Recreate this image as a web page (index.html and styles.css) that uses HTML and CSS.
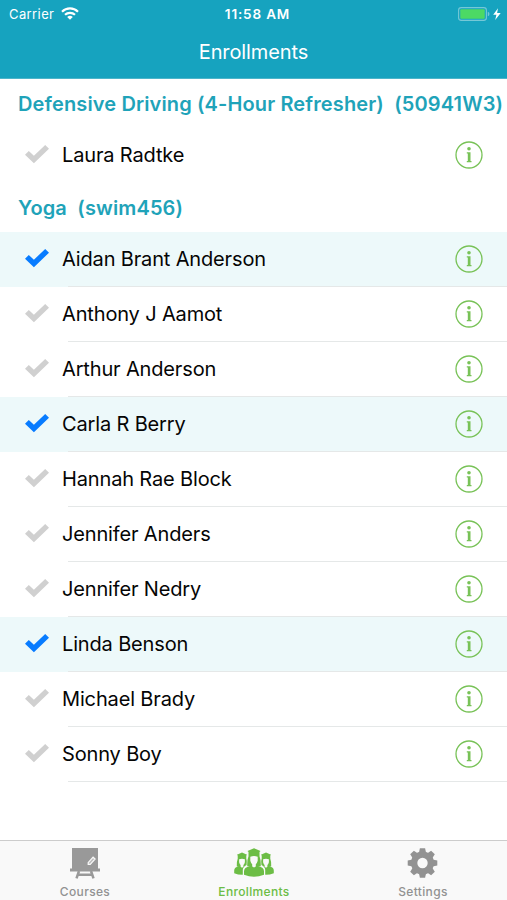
FILE: index.html
```html
<!DOCTYPE html>
<html lang="en">
<head>
<meta charset="utf-8">
<title>Enrollments</title>
<link rel="stylesheet" href="styles.css">
</head>
<body>
<svg class="defs" aria-hidden="true">
  <symbol id="check" viewBox="0 0 24 20"><path d="M0 10.7 3.8 7 8.9 11.8 20.2.9 24 4.7 8.9 19.3Z" fill="currentColor"/></symbol>
  <symbol id="info" viewBox="0 0 28 28"><circle cx="14" cy="14" r="13" fill="none" stroke="currentColor" stroke-width="1.3"/><circle cx="14" cy="7.8" r="1.8" fill="currentColor"/><path d="M11.8 11.2h3.7v8.9h1v1.2h-4.7v-1.2h1v-7.7h-1Z" fill="currentColor"/></symbol>
</svg>
<div class="app">
  <header class="top">
    <div class="status">
      <div class="carrier"><span>Carrier</span>
        <svg width="18" height="13" viewBox="0 0 18 13"><g fill="none" stroke="#fff" stroke-width="2.2"><path d="M1 4.7a11.5 11.5 0 0 1 16 0"/><path d="M4 7.8a7.2 7.2 0 0 1 10 0"/></g><path d="M6.2 10a4 4 0 0 1 5.6 0L9 12.8Z" fill="#fff"/></svg>
      </div>
      <div class="time">11:58 AM</div>
      <div class="power">
        <svg width="44" height="14" viewBox="0 0 44 14"><rect x=".6" y=".6" width="27.8" height="12.8" rx="2.6" fill="none" stroke="#75c8d7" stroke-width="1.1"/><rect x="2.3" y="2.3" width="24.4" height="9.4" rx="1" fill="#4cd964"/><path d="M29.8 4.7q1.7.6 1.7 2.3t-1.7 2.3Z" fill="#75c8d7"/><path d="M40 1.2 35.2 7.8h3.2L37.2 13 42.7 6.1h-3.6Z" fill="#fff"/></svg>
      </div>
    </div>
    <h1>Enrollments</h1>
  </header>
  <main>
    <h2 class="first">Defensive Driving (4-Hour Refresher)  (50941W3)</h2>
    <ul>
      <li><svg class="check"><use href="#check"/></svg><div class="cell"><span>Laura Radtke</span><svg class="info"><use href="#info"/></svg></div></li>
    </ul>
    <h2 class="yoga">Yoga  (swim456)</h2>
    <ul class="lined">
      <li class="on"><svg class="check"><use href="#check"/></svg><div class="cell"><span>Aidan Brant Anderson</span><svg class="info"><use href="#info"/></svg></div></li>
      <li><svg class="check"><use href="#check"/></svg><div class="cell"><span>Anthony J Aamot</span><svg class="info"><use href="#info"/></svg></div></li>
      <li><svg class="check"><use href="#check"/></svg><div class="cell"><span>Arthur Anderson</span><svg class="info"><use href="#info"/></svg></div></li>
      <li class="on"><svg class="check"><use href="#check"/></svg><div class="cell"><span>Carla R Berry</span><svg class="info"><use href="#info"/></svg></div></li>
      <li><svg class="check"><use href="#check"/></svg><div class="cell"><span>Hannah Rae Block</span><svg class="info"><use href="#info"/></svg></div></li>
      <li><svg class="check"><use href="#check"/></svg><div class="cell"><span>Jennifer Anders</span><svg class="info"><use href="#info"/></svg></div></li>
      <li><svg class="check"><use href="#check"/></svg><div class="cell"><span>Jennifer Nedry</span><svg class="info"><use href="#info"/></svg></div></li>
      <li class="on"><svg class="check"><use href="#check"/></svg><div class="cell"><span>Linda Benson</span><svg class="info"><use href="#info"/></svg></div></li>
      <li><svg class="check"><use href="#check"/></svg><div class="cell"><span>Michael Brady</span><svg class="info"><use href="#info"/></svg></div></li>
      <li><svg class="check"><use href="#check"/></svg><div class="cell"><span>Sonny Boy</span><svg class="info"><use href="#info"/></svg></div></li>
    </ul>
  </main>
  <nav>
    <div class="tab">
      <svg width="40" height="34" viewBox="0 0 40 34"><path d="M7 0h26v20.5h2v3H5v-3h2Z" fill="#999"/><path d="m14 23-2.5 7.3M26 23l2.5 7.3M13 26.7h14" fill="none" stroke="#999" stroke-width="2.5"/><path d="m23.2 14.6 4.9-5.4 2 1.8-4.9 5.4h-2Z" fill="#bbb" stroke="#f9f9f9" stroke-width="1.2"/></svg>
      <span>Courses</span>
    </div>
    <div class="tab active">
      <svg width="40" height="34" viewBox="0 0 40 34"><defs><g id="grad"><path d="m0-14 6.5 2.7-1 1.1V-6q1.6 4 1.2 10H4.2Q10 5 10 9v3.5q-10 4-20 0V9q0-4 5.8-5h-2.5q-.4-6 1.2-10v-4.2l-1-1.1Z" fill="#6cbd45"/><path d="M-3.7-5.5Q0-7 3.7-5.5v4Q3 1 1.8 2v2.2L0 5.4l-1.8-1.2V2Q-3 1-3.7-1.5Z" fill="#f9f9f9"/></g></defs><use href="#grad" transform="translate(8 15.5) scale(.78)"/><use href="#grad" transform="translate(32 15.5) scale(.78)"/><path d="m20 0 7.2 3.2-1 2V9q1.3 4 1.2 8 3.8 2 3.8 5v6H8.8v-6q0-3 3.8-5-.1-4 1.2-8V5.2l-1-2Z" fill="#f9f9f9"/><use href="#grad" transform="translate(20 14.2)"/></svg>
      <span>Enrollments</span>
    </div>
    <div class="tab">
      <svg width="40" height="34" viewBox="0 0 40 34"><g fill="#929292" transform="translate(19.5 15)"><g id="teeth"><path id="tooth" d="M-3.6-10-2.6-14.8h5.2L3.6-10V10L2.6 14.8h-5.2L-3.6 10Z"/><use href="#tooth" transform="rotate(90)"/></g><use href="#teeth" transform="rotate(45)"/><circle r="11.5"/><circle r="5.2" fill="#f9f9f9"/></g></svg>
      <span>Settings</span>
    </div>
  </nav>
</div>
</body>
</html>
```

FILE: styles.css
```css
* { box-sizing: border-box; }
body { margin: 0; font-family: Inter, "Liberation Sans", sans-serif; color: #111; background: #fff; }
h1, h2, ul { margin: 0; padding: 0; font-weight: 400; }
svg { display: block; flex: none; }
.defs { display: none; }
.app { width: 507px; height: 900px; display: flex; flex-direction: column; overflow: hidden; }
.top { height: 79px; background: #16a3bf; color: #fff; border-bottom: 1px solid #4cb5ca; }
.status { height: 27px; padding: 0 5px 0 9px; display: grid; grid-template-columns: 1fr auto 1fr; align-items: center; font-size: 13px; }
.carrier { display: flex; align-items: center; gap: 7px; letter-spacing: .4px; }
.time { font-weight: 600; font-size: 13.5px; letter-spacing: .85px; padding-left: 4px; }
.power { justify-self: end; }
h1 { font-size: 20px; line-height: 50px; text-align: center; letter-spacing: -.1px; }
main { flex: 1; }
h2 { padding-left: 18px; font-size: 20px; font-weight: 600; color: #1fa3b9; white-space: pre; letter-spacing: .13px; }
.first { height: 49px; line-height: 50px; }
.yoga { height: 49px; line-height: 50px; }
ul { list-style: none; }
li { height: 55px; padding-left: 25px; display: flex; align-items: center; color: #d0d0d0; }
.check { width: 24px; height: 20px; margin-bottom: 3px; }
.cell { flex: 1; height: 55px; margin-left: 13px; padding: 0 24px 2px 0; display: flex; align-items: center; justify-content: space-between; color: #050505; font-size: 20px; letter-spacing: -.15px; }
.lined .cell { background: linear-gradient(#e5e8e8, #e5e8e8) 6px 54px / 100% 1px no-repeat; }
.info { width: 28px; height: 28px; color: #78c257; }
.on { background: #edf9fa; color: #087cff; }
nav { height: 60px; display: grid; grid-template-columns: repeat(3, 169px); border-top: 1px solid #ccc; background: #f9f9f9; }
.tab { padding: 7px 0 0 1px; display: flex; flex-direction: column; align-items: center; gap: 2px; color: #929292; font-size: 12px; line-height: 16px; font-weight: 500; letter-spacing: .35px; }
.active { color: #6cbd45; }
```
